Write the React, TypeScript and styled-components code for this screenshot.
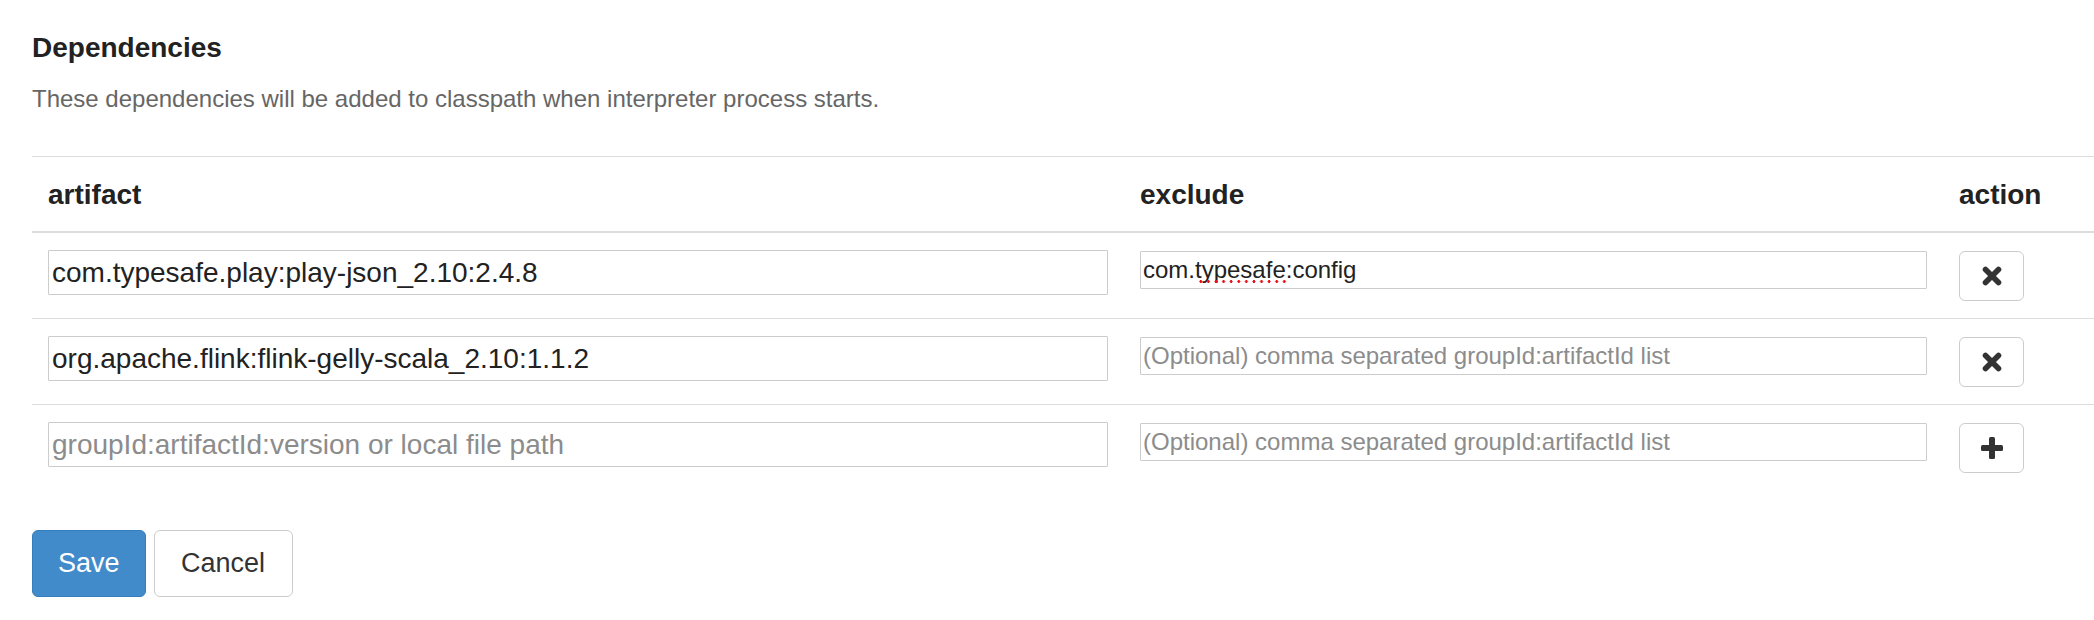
import React from "react";
import styled, { createGlobalStyle } from "styled-components";

const GlobalStyle = createGlobalStyle`
  html, body {
    margin: 0;
    padding: 0;
    background: #ffffff;
  }
  body {
    font-family: "Liberation Sans", Arial, Helvetica, sans-serif;
    color: #222;
  }
  * { box-sizing: border-box; }
`;

const Page = styled.div`
  padding: 32px 0 0 32px;
  width: 2094px;
  height: 620px;
  overflow: hidden;
`;

const Title = styled.h4`
  margin: 0;
  font-size: 28px;
  line-height: 31px;
  font-weight: 700;
  color: #222;
`;

const Description = styled.p`
  margin: 19px 0 0;
  font-size: 24px;
  line-height: 34px;
  color: #666;
`;

const Table = styled.table`
  margin-top: 40px;
  width: 2062px;
  table-layout: fixed;
  border-collapse: separate;
  border-spacing: 0;
`;

const HeadCell = styled.th`
  text-align: left;
  font-size: 28px;
  line-height: 40px;
  font-weight: 700;
  color: #222;
  padding: 18px 16px 16px;
  border-top: 1px solid #ddd;
  border-bottom: 2px solid #ddd;
`;

const Row = styled.tr<{ $first?: boolean }>`
  & > td {
    border-top: ${(p) => (p.$first ? "none" : "1px solid #ddd")};
  }
`;

const Cell = styled.td`
  vertical-align: top;
  padding: 17px 16px;
`;

const ArtifactInput = styled.input`
  display: block;
  width: 100%;
  height: 45px;
  margin: 0;
  padding: 0 3px;
  border: 1px solid #ccc;
  border-radius: 1px;
  font-family: "Liberation Sans", Arial, sans-serif;
  font-size: 28px;
  color: #222;
  background: #fff;
  outline: none;
  &::placeholder {
    color: #8c8c8c;
  }
`;

const ExcludeWrap = styled.div`
  position: relative;
  margin-top: 1px;
`;

const ExcludeInput = styled.input`
  display: block;
  width: 100%;
  height: 38px;
  margin: 0;
  padding: 0 2px;
  border: 1px solid #ccc;
  border-radius: 1px;
  font-family: "Liberation Sans", Arial, sans-serif;
  font-size: 24px;
  color: #222;
  background: #fff;
  outline: none;
  &::placeholder {
    color: #8c8c8c;
  }
`;

const SpellMark = styled.span`
  position: absolute;
  left: 57px;
  top: 29px;
  width: 92px;
  height: 3px;
  background-image: radial-gradient(circle, #e8101a 1.3px, transparent 1.6px);
  background-size: 7.6px 3px;
  background-repeat: repeat-x;
  pointer-events: none;
`;

const IconButton = styled.button`
  display: flex;
  align-items: center;
  justify-content: center;
  margin-top: 1px;
  width: 65px;
  height: 50px;
  padding: 0;
  border: 1px solid #ccc;
  border-radius: 6px;
  background: #fff;
  color: #333;
  cursor: pointer;
`;

const Actions = styled.div`
  display: flex;
  gap: 8px;
  margin-top: 40px;
`;

const Button = styled.button<{ $primary?: boolean }>`
  height: 67px;
  padding: 0 ${(p) => (p.$primary ? "25px" : "26.5px")};
  border-radius: 6px;
  font-family: "Liberation Sans", Arial, sans-serif;
  font-size: 27px;
  line-height: 1;
  cursor: pointer;
  border: 1px solid ${(p) => (p.$primary ? "#357ebd" : "#ccc")};
  background: ${(p) => (p.$primary ? "#428bca" : "#fff")};
  color: ${(p) => (p.$primary ? "#fff" : "#333")};
`;

const RemoveIcon = () => (
  <svg width="20" height="20" viewBox="0 0 20 20" aria-hidden="true">
    <path
      d="M3.5 3.5 L16.5 16.5 M16.5 3.5 L3.5 16.5"
      stroke="#333"
      strokeWidth="5.6"
      strokeLinecap="round"
      fill="none"
    />
  </svg>
);

const PlusIcon = () => (
  <svg width="22" height="22" viewBox="0 0 22 22" aria-hidden="true">
    <rect x="0" y="8" width="22" height="6" rx="1.5" fill="#333" />
    <rect x="8" y="0" width="6" height="22" rx="1.5" fill="#333" />
  </svg>
);

type Dep = { artifact: string; exclude: string; spell?: boolean };

const deps: Dep[] = [
  { artifact: "com.typesafe.play:play-json_2.10:2.4.8", exclude: "com.typesafe:config", spell: true },
  { artifact: "org.apache.flink:flink-gelly-scala_2.10:1.1.2", exclude: "" },
];

const ARTIFACT_PH = "groupId:artifactId:version or local file path";
const EXCLUDE_PH = "(Optional) comma separated groupId:artifactId list";

export default function App() {
  return (
    <>
      <GlobalStyle />
      <Page>
        <Title>Dependencies</Title>
        <Description>
          These dependencies will be added to classpath when interpreter process starts.
        </Description>
        <Table>
          <colgroup>
            <col style={{ width: 1092 }} />
            <col style={{ width: 819 }} />
            <col style={{ width: 151 }} />
          </colgroup>
          <thead>
            <tr>
              <HeadCell>artifact</HeadCell>
              <HeadCell>exclude</HeadCell>
              <HeadCell>action</HeadCell>
            </tr>
          </thead>
          <tbody>
            {deps.map((d, i) => (
              <Row key={d.artifact} $first={i === 0}>
                <Cell>
                  <ArtifactInput defaultValue={d.artifact} placeholder={ARTIFACT_PH} />
                </Cell>
                <Cell>
                  <ExcludeWrap>
                    <ExcludeInput defaultValue={d.exclude} placeholder={EXCLUDE_PH} spellCheck={false} />
                    {d.spell && <SpellMark />}
                  </ExcludeWrap>
                </Cell>
                <Cell>
                  <IconButton aria-label="remove">
                    <RemoveIcon />
                  </IconButton>
                </Cell>
              </Row>
            ))}
            <Row>
              <Cell>
                <ArtifactInput placeholder={ARTIFACT_PH} />
              </Cell>
              <Cell>
                <ExcludeWrap>
                  <ExcludeInput placeholder={EXCLUDE_PH} />
                </ExcludeWrap>
              </Cell>
              <Cell>
                <IconButton aria-label="add">
                  <PlusIcon />
                </IconButton>
              </Cell>
            </Row>
          </tbody>
        </Table>
        <Actions>
          <Button $primary>Save</Button>
          <Button>Cancel</Button>
        </Actions>
      </Page>
    </>
  );
}
